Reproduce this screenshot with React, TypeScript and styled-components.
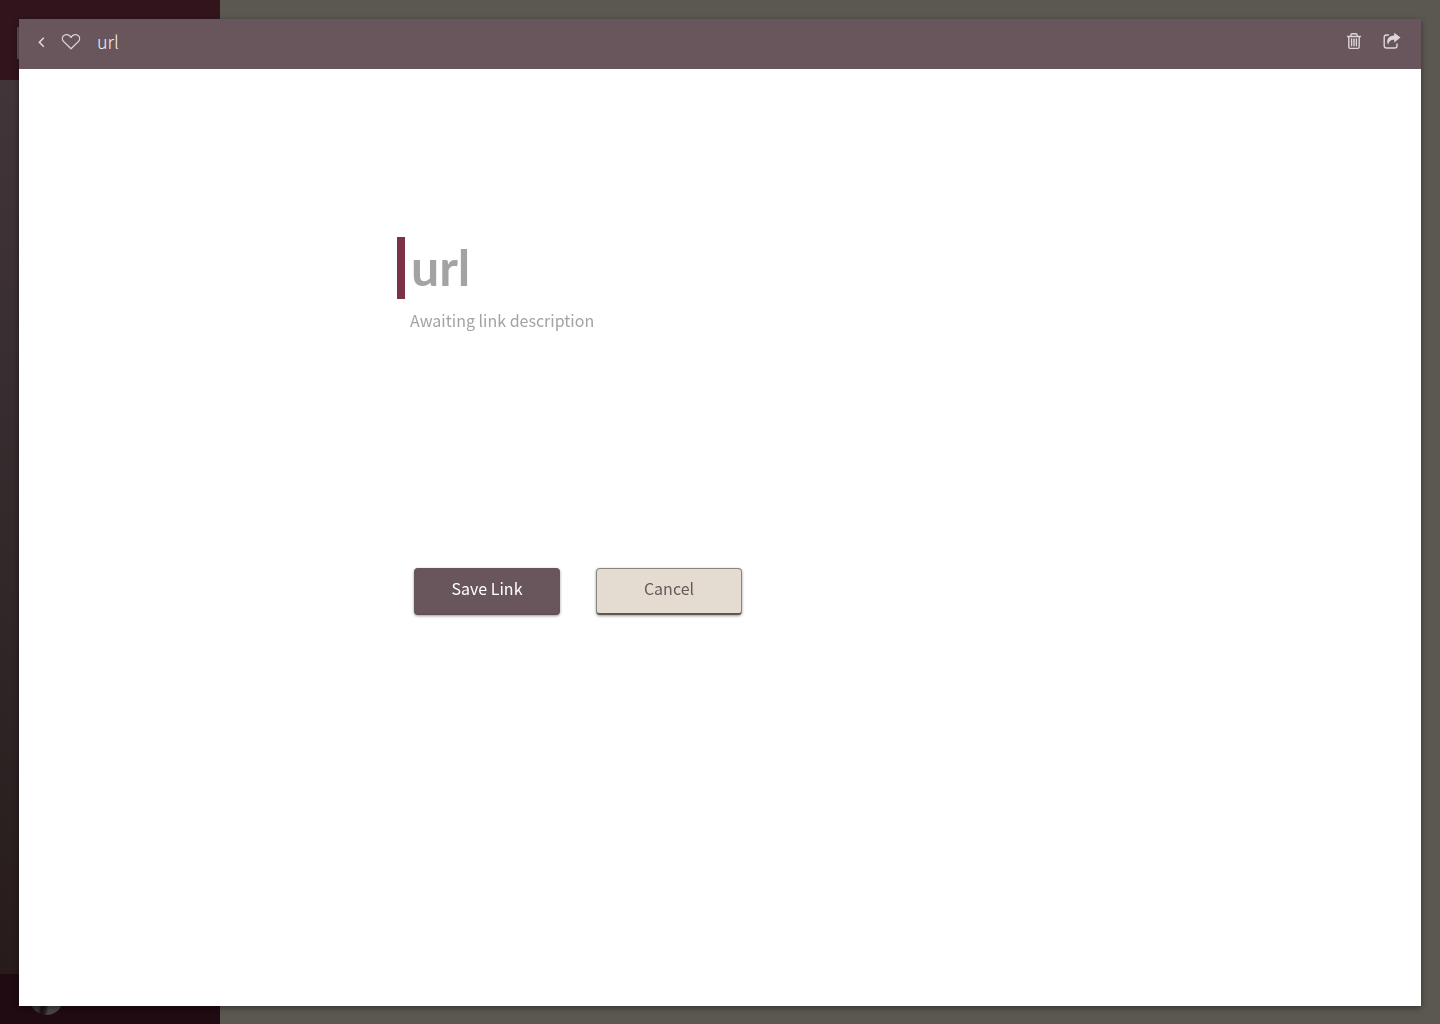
import React from "react";
import styled, { createGlobalStyle } from "styled-components";

const GlobalStyle = createGlobalStyle`
  *, *::before, *::after { box-sizing: border-box; }
  body {
    margin: 0;
    overflow: hidden;
    background: #5b5851;
    font-family: "Noto Sans CJK SC", "Open Sans", sans-serif;
  }
  h1, h2, p { margin: 0; }
  button { font: inherit; cursor: pointer; }
`;

const Page = styled.div`
  display: flex;
  min-height: 100vh;
  background: #5b5851;
`;

const Sidebar = styled.aside`
  display: flex;
  flex-direction: column;
  width: 220px;
`;

const SidebarTop = styled.div`
  height: 80px;
  padding: 27px 17px;
  background: #32141d;
`;

const SearchField = styled.div`
  height: 32px;
  background: #5c5055;
`;

const SidebarMenu = styled.div`
  flex: 1;
  background: linear-gradient(#41353a, #33292b 50%, #271c1b);
`;

const SidebarFooter = styled.div`
  display: flex;
  align-items: center;
  height: 50px;
  padding: 0 30px 2px;
  background: #1f0b11;
`;

const Avatar = styled.div`
  width: 33px;
  height: 33px;
  border-radius: 50%;
  background: linear-gradient(100deg, #3a3438 34%, #151014 42%, #2a1d1a 52%, #48454b 60%);
`;

const Dialog = styled.main`
  position: fixed;
  inset: 19px 19px 18px;
  display: flex;
  flex-direction: column;
  background: #fff;
  box-shadow: 0 2px 6px rgba(0, 0, 0, 0.4);
`;

const Toolbar = styled.header`
  display: flex;
  align-items: center;
  flex: none;
  height: 50px;
  padding: 0 19px 6px 17px;
  background: #69565c;
  color: #ddd5d8;
`;

const IconButton = styled.button<{ $gap: number }>`
  display: flex;
  margin: 0 ${(p) => p.$gap}px 0 0;
  padding: 0;
  border: 0;
  background: none;
  color: inherit;
`;

const ToolbarTitle = styled.h2`
  flex: 1;
  color: #f3eff0;
  font-size: 18px;
  font-weight: 300;
  line-height: 24px;
`;

const Content = styled.section`
  flex: 1;
  padding: 168px 24px 24px 378px;
`;

const Title = styled.h1`
  height: 62px;
  padding-left: 6px;
  border-left: 8px solid #7b3246;
  color: #a3a3a3;
  font-family: Lato, sans-serif;
  font-size: 50px;
  font-weight: 700;
  line-height: 60px;
`;

const Description = styled.p`
  padding: 9px 0 0 13px;
  color: #a3a3a3;
  font-size: 16px;
  line-height: 24px;
`;

const Actions = styled.div`
  display: flex;
  gap: 36px;
  padding: 236px 0 0 17px;
`;

const ActionButton = styled.button<{ $primary?: boolean }>`
  width: 146px;
  height: 47px;
  padding: 0 0 6px;
  border: 1px solid ${(p) => (p.$primary ? "#69565c" : "#8b8480")};
  border-bottom: ${(p) => (p.$primary ? "2px solid #62515a" : "2px solid #5e5855")};
  border-radius: 4px;
  background: ${(p) => (p.$primary ? "#69565c" : "#e4dcd1")};
  color: ${(p) => (p.$primary ? "#fff" : "#69595a")};
  font-size: 16px;
  line-height: 24px;
  box-shadow: 0 1px 3px rgba(0, 0, 0, 0.4);
`;

const BackIcon = () => (
  <svg width="12" height="18" viewBox="0 0 12 18" fill="none" stroke="currentColor" strokeWidth="1.6">
    <path d="M7.800 5.700 3.400 10.200l4.400 4.500" />
  </svg>
);

const HeartIcon = () => (
  <svg width="20" height="18" viewBox="0 0 20 18" fill="none" stroke="currentColor" strokeWidth="1.3" strokeLinejoin="round">
    <path d="M10 16.800 2.700 9.600C1.200 8.100 1 5.600 2.200 4.100 4 1.800 8.300 1.900 10 5.400c1.700-3.500 6-3.600 7.800-1.300C19 5.600 18.800 8.100 17.300 9.600Z" />
  </svg>
);

const TrashIcon = () => (
  <svg width="16" height="18" viewBox="0 0 16 18" fill="none" stroke="currentColor" strokeWidth="1.4" strokeLinecap="round">
    <path d="M1.500 4.500h13M5 4V2.700Q5 1.700 6 1.700h4q1 0 1 1V4M2.800 4.500V15q0 1.400 1.400 1.400h7.600q1.400 0 1.400-1.400V4.500M5.600 7v6.700M8 7v6.700M10.400 7v6.700" />
  </svg>
);

const ShareIcon = () => (
  <svg width="20" height="18" viewBox="0 0 20 18" fill="none" stroke="currentColor" strokeWidth="1.4" strokeLinecap="round">
    <path d="M6.500 3H4.500Q2.200 3 2.200 5.300v8.400Q2.200 16 4.500 16h8.200q2.300 0 2.300-2.300V12" />
    <path
      d="M12.200.8 18.500 5.600l-6.300 4.900V7.800C8.900 7.600 7.100 9.100 6 12.800 3.800 7.800 6.500 3.400 12.200 3.400Z"
      fill="currentColor"
      stroke="none"
    />
  </svg>
);

export default function App() {
  return (
    <>
      <GlobalStyle />
      <Page>
        <Sidebar>
          <SidebarTop>
            <SearchField />
          </SidebarTop>
          <SidebarMenu />
          <SidebarFooter>
            <Avatar />
          </SidebarFooter>
        </Sidebar>
      </Page>
      <Dialog>
        <Toolbar>
          <IconButton type="button" aria-label="Back" $gap={13}>
            <BackIcon />
          </IconButton>
          <IconButton type="button" aria-label="Favorite" $gap={16}>
            <HeartIcon />
          </IconButton>
          <ToolbarTitle>url</ToolbarTitle>
          <IconButton type="button" aria-label="Delete" $gap={20}>
            <TrashIcon />
          </IconButton>
          <IconButton type="button" aria-label="Share" $gap={0}>
            <ShareIcon />
          </IconButton>
        </Toolbar>
        <Content>
          <Title>url</Title>
          <Description>Awaiting link description</Description>
          <Actions>
            <ActionButton type="button" $primary>
              Save Link
            </ActionButton>
            <ActionButton type="button">Cancel</ActionButton>
          </Actions>
        </Content>
      </Dialog>
    </>
  );
}
